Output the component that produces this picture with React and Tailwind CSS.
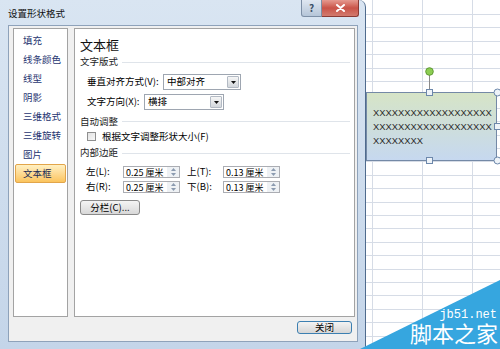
import React from 'react';

const navItems = ['填充', '线条颜色', '线型', '阴影', '三维格式', '三维旋转', '图片', '文本框'];

const SectionHeader = ({ children, className = '' }) => (
  <div className={`flex items-center ${className}`}>
    <span className="text-[9.5px] leading-none text-[#1d1d1d]">{children}</span>
    <div className="ml-[4px] mr-[4px] h-px flex-1 bg-[#dfe4ea]" />
  </div>
);

const Select = ({ value, className = '' }) => (
  <div className={`flex h-[16px] items-stretch border border-[#9ea6b1] bg-white ${className}`}>
    <span className="flex flex-1 items-center pl-[3px] text-[9.5px] leading-none">{value}</span>
    <span className="my-[1px] mr-[1px] flex w-[12px] items-center justify-center rounded-[1px] border border-[#b3bac4] bg-gradient-to-b from-[#f6f6f6] to-[#d3d7dc]">
      <svg width="5" height="3" viewBox="0 0 5 3">
        <path d="M0 0h5L2.5 3z" fill="#111" />
      </svg>
    </span>
  </div>
);

const SpinInput = ({ value }) => (
  <div className="flex h-[12px] w-[57px] border border-[#abadb3] bg-white">
    <span className="flex flex-1 items-center overflow-hidden whitespace-nowrap pl-[2px] text-[9px] leading-none">
      {value}
    </span>
    <span className="flex w-[12px] flex-col items-center justify-around bg-[#eef1f4]">
      <svg width="5" height="3" viewBox="0 0 5 3">
        <path d="M0 3h5L2.5 0z" fill="#8b9bb0" />
      </svg>
      <svg width="5" height="3" viewBox="0 0 5 3">
        <path d="M0 0h5L2.5 3z" fill="#8b9bb0" />
      </svg>
    </span>
  </div>
);

const Dialog = () => (
  <div className="flex h-[349px] w-[366px] shrink-0 flex-col rounded-tr-[7px] border-r border-[#4f6b8d] bg-gradient-to-b from-[#d9e5f2] to-[#c4d5e9]">
    <div className="flex h-[25px] items-start">
      <div className="flex h-[25px] flex-1 items-center pl-[8px] pt-[3px] text-[9.5px] leading-none text-[#111]">
        设置形状格式
      </div>
      <div className="mr-[6px] flex">
        <div className="flex h-[17px] w-[21px] items-center justify-center rounded-bl-[3px] border border-t-0 border-[#7d8fa6] bg-gradient-to-b from-[#dfe7f1] to-[#b5c5d8] text-[10px] font-bold leading-none text-[#3b4f66]">
          ?
        </div>
        <div className="flex h-[17px] w-[37px] items-center justify-center rounded-br-[3px] border border-l-0 border-t-0 border-[#8a3a34] bg-gradient-to-b from-[#e59a90] via-[#c95348] to-[#d27a6e]">
          <svg width="9" height="8" viewBox="0 0 9 8">
            <path d="M1 1l7 6M8 1L1 7" stroke="#fff" strokeWidth="2" strokeLinecap="round" />
          </svg>
        </div>
      </div>
    </div>

    <div className="ml-[8px] mr-[7px] flex h-[317px] flex-col border border-[#8ea2ba] bg-[#f0f0f0] pl-[4px] pr-[2px] pt-[2px]">
      <div className="flex h-[289px] gap-[6px]">
        <div className="w-[55px] border border-[#a3a3a3] bg-white pt-[2px]">
          {navItems.map((item) => (
            <div
              key={item}
              className={
                item === '文本框'
                  ? 'mx-[1px] flex h-[19px] items-center rounded-[2px] border border-[#e2a54a] bg-gradient-to-b from-[#fff0c2] to-[#fbc45c] pl-[7px] text-[9.5px] leading-none text-[#1c2a55]'
                  : 'flex h-[19px] items-center pl-[9px] text-[9.5px] leading-none text-[#1e3470]'
              }
            >
              {item}
            </div>
          ))}
        </div>

        <div className="flex w-[281px] flex-col border border-[#a3a3a3] bg-white pl-[5px]">
          <div className="mt-[7px] flex h-[17px] items-center text-[13px] leading-none text-[#111]">文本框</div>
          <SectionHeader className="h-[18px]">文字版式</SectionHeader>

          <div className="flex h-[22px] items-center pl-[7px]">
            <span className="w-[76px] text-[9.5px] leading-none">垂直对齐方式(V):</span>
            <Select value="中部对齐" className="w-[78px]" />
          </div>
          <div className="flex h-[18px] items-center pl-[7px]">
            <span className="w-[57px] text-[9.5px] leading-none">文字方向(X):</span>
            <Select value="横排" className="w-[80px]" />
          </div>

          <SectionHeader className="h-[21px]">自动调整</SectionHeader>
          <div className="flex h-[9px] items-center pl-[7px]">
            <span className="h-[9px] w-[9px] border border-[#8f8f8f] bg-gradient-to-br from-[#e2e2e2] to-[#f8f8f8]" />
            <span className="ml-[6px] text-[9.5px] leading-none">根据文字调整形状大小(F)</span>
          </div>

          <SectionHeader className="h-[24px]">内部边距</SectionHeader>
          <div className="flex h-[14px] items-center pl-[6px]">
            <span className="w-[37px] text-[9.5px] leading-none">左(L):</span>
            <SpinInput value="0.25 厘米" />
            <span className="ml-[7px] w-[36px] text-[9.5px] leading-none">上(T):</span>
            <SpinInput value="0.13 厘米" />
          </div>
          <div className="flex h-[16px] items-center pl-[6px]">
            <span className="w-[37px] text-[9.5px] leading-none">右(R):</span>
            <SpinInput value="0.25 厘米" />
            <span className="ml-[7px] w-[36px] text-[9.5px] leading-none">下(B):</span>
            <SpinInput value="0.13 厘米" />
          </div>

          <div className="mt-[5px] flex h-[15px] w-[60px] items-center justify-center rounded-[3px] border border-[#8a8a8a] bg-gradient-to-b from-[#f4f4f4] to-[#d8d8d8] text-[9.5px] leading-none">
            分栏(C)...
          </div>
        </div>
      </div>

      <div className="mt-[4px] flex justify-end pr-[3px]">
        <div className="flex h-[13px] w-[55px] items-center justify-center rounded-[3px] border border-[#3c7fb1] bg-gradient-to-b from-[#f3f3f3] to-[#d6d6d6] text-[9.5px] leading-none">
          关闭
        </div>
      </div>
    </div>
  </div>
);

const Sheet = () => {
  const rows = Array.from({ length: 26 }, (_, i) => 14 + i * 13.4);
  return (
    <div className="relative flex-1 bg-white">
      <svg className="absolute inset-0" width="134" height="349">
        {[6, 56, 106].map((x) => (
          <line key={x} x1={x + 0.5} y1="0" x2={x + 0.5} y2="349" stroke="#d6dce6" />
        ))}
        {rows.map((y) => (
          <line key={y} x1="0" y1={Math.round(y) + 0.5} x2="134" y2={Math.round(y) + 0.5} stroke="#d6dce6" />
        ))}
      </svg>

      <div className="absolute left-0 top-[92px] h-[69px] w-[131px] border border-[#7489a6] bg-gradient-to-b from-[#d6e4c6] to-[#c6d8ef] pl-[6px] pt-[13px] text-[9.4px] leading-[14px] text-[#2a2a2a] font-['Liberation_Sans',sans-serif]">
        <div>XXXXXXXXXXXXXXXXXXX</div>
        <div>XXXXXXXXXXXXXXXXXXX</div>
        <div>XXXXXXXX</div>
      </div>

      <svg className="absolute left-0 top-0" width="134" height="170">
        <line x1="63.5" y1="75" x2="63.5" y2="89" stroke="#8a8a8a" />
        <circle cx="63.5" cy="71.5" r="3.8" fill="#8ccd52" stroke="#5f9a33" />
        <rect x="60.5" y="89.5" width="6" height="6" fill="#eef3f8" stroke="#6d88ab" />
        <rect x="60.5" y="157.5" width="6" height="6" fill="#eef3f8" stroke="#6d88ab" />
        <rect x="128.5" y="123.5" width="6" height="6" fill="#eef3f8" stroke="#6d88ab" />
        <circle cx="131.5" cy="92.5" r="3.5" fill="#eef3f8" stroke="#6d88ab" />
        <circle cx="131.5" cy="160.5" r="3.5" fill="#eef3f8" stroke="#6d88ab" />
      </svg>
    </div>
  );
};

const App = () => (
  <div className="relative flex h-[349px] w-[500px] overflow-hidden bg-white text-black font-['Noto_Sans_CJK_SC','Noto_Sans',sans-serif]">
    <Dialog />
    <Sheet />

    <svg className="absolute left-0 top-0" width="500" height="349">
      <polygon points="360,349 500,280 500,349" fill="#36a6df" />
    </svg>
    <div className="absolute right-[3px] top-[309px] text-[12px] leading-[12px] text-white font-['Liberation_Mono',monospace]">
      jb51.net
    </div>
    <div className="absolute right-[2px] top-[324px] text-[22px] leading-[22px] text-white font-['Liberation_Sans','Noto_Sans_CJK_SC',sans-serif]">
      脚本之家
    </div>
  </div>
);

export default App;
